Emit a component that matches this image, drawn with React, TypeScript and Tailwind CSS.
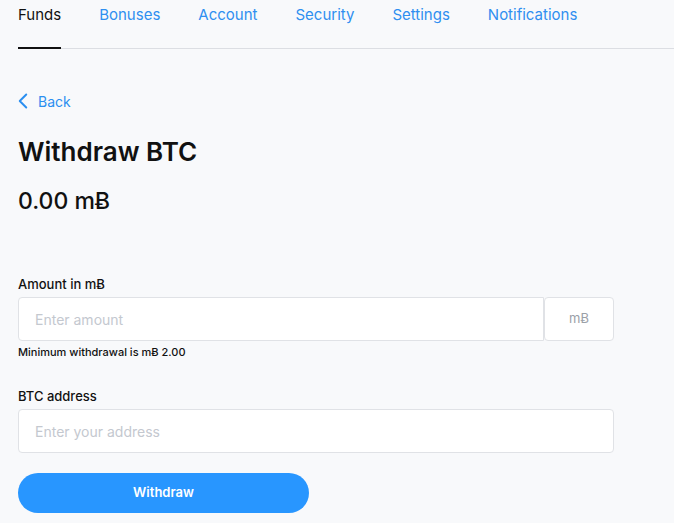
import { ChevronLeft } from "lucide-react";

const tabs = ["Funds", "Bonuses", "Account", "Security", "Settings", "Notifications"];

const App = () => {
    return (
        <div className="min-h-[523px] bg-[#f8f9fb] font-['Inter',sans-serif] text-[#111]">
            <nav className="ml-[18px] flex gap-[38px] border-b border-[#dcdee3]">
                {tabs.map((t, i) => (
                    <div
                        key={t}
                        className={
                            i === 0
                                ? "-mb-px border-b-2 border-[#111] pt-[5px] pb-[22px] text-[15px] leading-[20px] text-[#111]"
                                : "pt-[5px] pb-[22px] text-[15px] leading-[20px] text-[#2f8ff0]"
                        }
                    >
                        {t}
                    </div>
                ))}
            </nav>

            <div className="w-[632px] px-[18px] pt-[41px]">
                <div className="flex h-[22px] items-center gap-[2px] text-[14px] text-[#2b8ff0]">
                    <ChevronLeft size={26} strokeWidth={1.8} className="-ml-[8px]" />
                    <span>Back</span>
                </div>

                <h1 className="mt-[23px] text-[26px] font-semibold leading-[34px]">Withdraw BTC</h1>
                <div className="mt-[17px] text-[23px] font-medium leading-[30px]">0.00 mɃ</div>

                <label className="mt-[59px] block text-[13px] font-medium leading-[18px]">Amount in mɃ</label>
                <div className="mt-[4px] flex h-[44px]">
                    <div className="flex flex-1 items-center rounded-l-[4px] border border-[#e0e2e6] bg-white px-[16px] text-[14px] text-[#c4c8cf]">
                        Enter amount
                    </div>
                    <div className="flex w-[70px] items-center justify-center rounded-[4px] border border-[#e0e2e6] bg-white text-[13px] text-[#9ba0a8]">
                        mɃ
                    </div>
                </div>
                <div className="mt-[4px] text-[11px] font-medium leading-[14px]">Minimum withdrawal is mɃ 2.00</div>

                <label className="mt-[28px] block text-[13px] font-medium leading-[18px]">BTC address</label>
                <div className="mt-[4px] flex h-[44px] items-center rounded-[4px] border border-[#e0e2e6] bg-white px-[16px] text-[14px] text-[#c4c8cf]">
                    Enter your address
                </div>

                <button className="mt-[20px] flex h-[40px] w-[291px] items-center justify-center rounded-full bg-[#2896ff] text-[13px] font-semibold text-white">
                    Withdraw
                </button>
            </div>
        </div>
    );
};

export default App;
